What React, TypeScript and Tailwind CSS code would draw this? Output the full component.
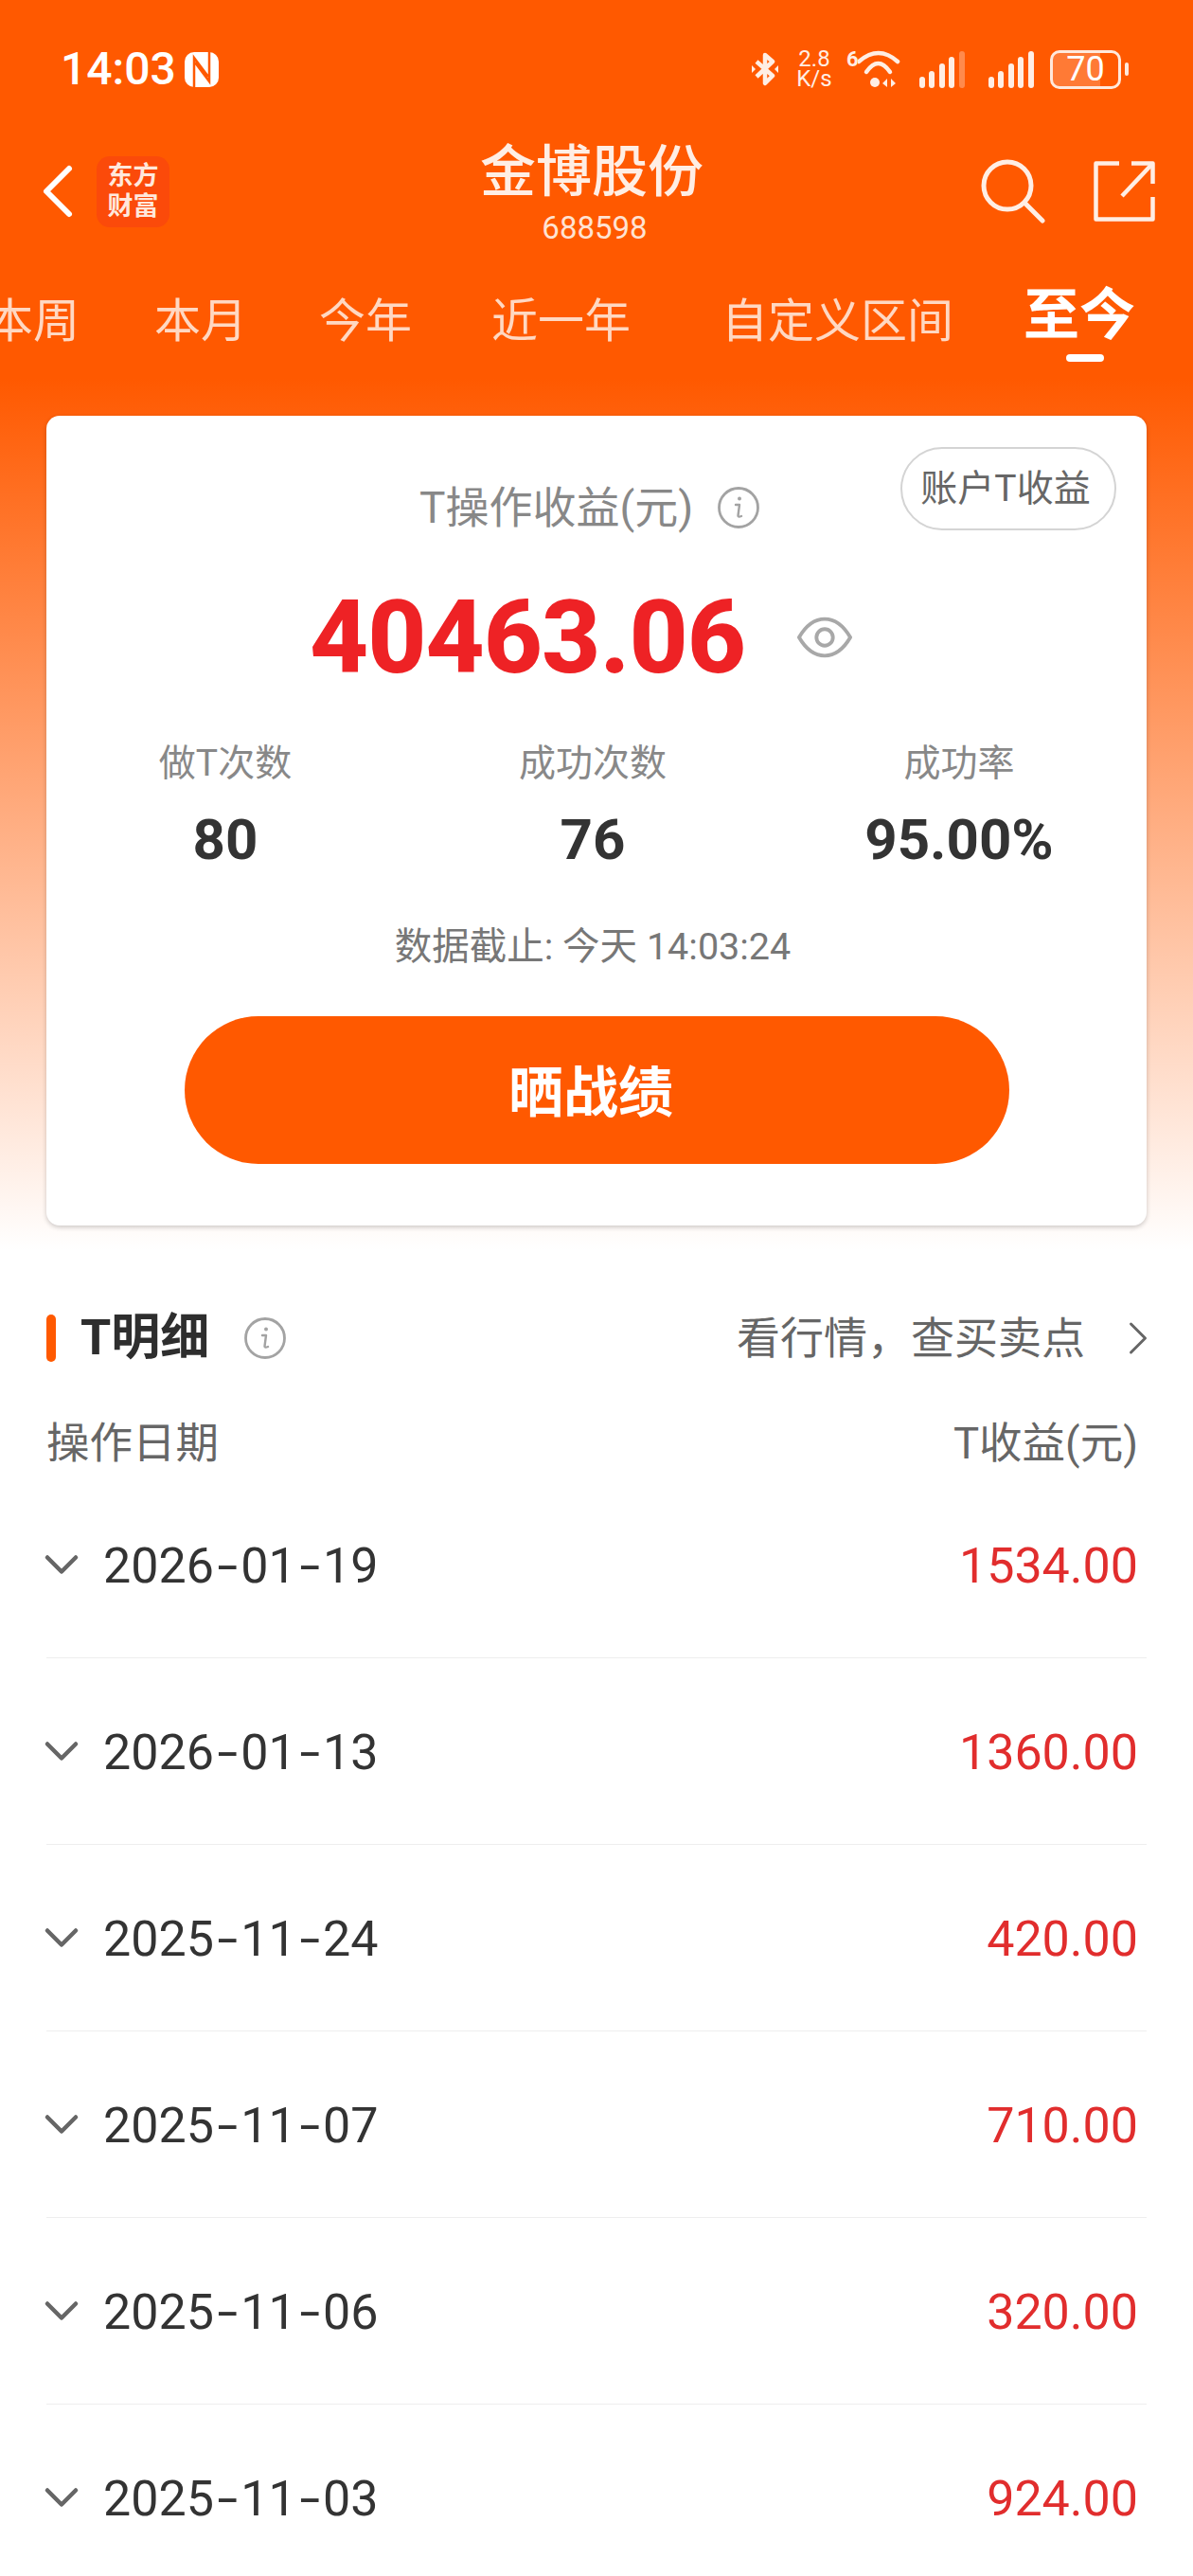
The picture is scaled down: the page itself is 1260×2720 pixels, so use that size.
import { ChevronDown, ChevronLeft, ChevronRight } from 'lucide-react';

const cjk = "font-['Roboto','Noto_Sans_CJK_SC',sans-serif]";

const tabs = [
  { label: '本周', className: '-ml-[14px]' },
  { label: '本月', className: 'ml-[79px]' },
  { label: '今年', className: 'ml-[76px]' },
  { label: '近一年', className: 'ml-[84px]' },
  { label: '自定义区间', className: 'ml-[96px]' },
];

const stats = [
  { label: '做T次数', value: '80' },
  { label: '成功次数', value: '76' },
  { label: '成功率', value: '95.00%' },
];

const rows = [
  { date: ['2026', '01', '19'], amount: '1534.00' },
  { date: ['2026', '01', '13'], amount: '1360.00' },
  { date: ['2025', '11', '24'], amount: '420.00' },
  { date: ['2025', '11', '07'], amount: '710.00' },
  { date: ['2025', '11', '06'], amount: '320.00' },
  { date: ['2025', '11', '03'], amount: '924.00' },
];

function InfoIcon({ className }: { className?: string }) {
  return (
    <svg viewBox="0 0 46 46" className={className} fill="none" stroke="#a3a3a3" strokeWidth="2.8">
      <circle cx="23" cy="23" r="20.5" />
      <circle cx="24" cy="13.5" r="2" fill="#a3a3a3" stroke="none" />
      <path d="M20 20h4l-1.5 11.5q0 2 3.5 0.5" strokeWidth="2.4" strokeLinecap="round" strokeLinejoin="round" />
    </svg>
  );
}

function SignalIcon({ dimLast }: { dimLast?: boolean }) {
  const bars = [
    { x: 0, h: 12 },
    { x: 10, h: 18 },
    { x: 21, h: 26 },
    { x: 31, h: 33 },
    { x: 42, h: 39 },
  ];
  return (
    <svg viewBox="0 0 49 39" className="h-[39px] w-[49px]">
      {bars.map((bar, index) => (
        <rect
          key={bar.x}
          x={bar.x}
          y={39 - bar.h}
          width="6"
          height={bar.h}
          rx="3"
          fill={dimLast && index === 4 ? '#ff8a4d' : '#ffeee4'}
        />
      ))}
    </svg>
  );
}

function StatusIcons() {
  return (
    <div className="flex items-center">
      {/* bluetooth */}
      <svg viewBox="0 0 28 36" className="h-[36px] w-[28px]" fill="none" stroke="#ffeee4" strokeWidth="4.5" strokeLinejoin="round">
        <path d="M5 10l17 15-8 8V3l8 7L5 26" />
        <path d="M0 14l4 4-4 4zM28 14l-4 4 4 4z" fill="#ffeee4" stroke="none" />
      </svg>
      <div className="ml-[19px] flex w-[38px] flex-col items-center text-[24px] text-[#ffeee4]">
        <span className="h-[21px] leading-[21px]">2.8</span>
        <span className="h-[21px] leading-[21px]">K/s</span>
      </div>
      {/* wifi */}
      <span className="mb-[20px] ml-[15px] w-[12px] text-[22px] leading-[20px] font-bold text-[#ffeee4]">6</span>
      <svg viewBox="12 0 45 40" className="h-[40px] w-[45px]" fill="none" stroke="#ffeee4" strokeLinecap="round">
        <path d="M13 12Q34-6 54 12" strokeWidth="4.5" />
        <path d="M21 23Q33.5 5 46 23" strokeWidth="4.5" />
        <circle cx="30" cy="34" r="5" fill="#ffeee4" stroke="none" />
        <path d="M43 30l-5 5 5 4zM47 30l5 5-5 4z" fill="#ffeee4" stroke="none" />
      </svg>
      <div className="ml-[20px]">
        <SignalIcon dimLast />
      </div>
      <div className="ml-[24px]">
        <SignalIcon />
      </div>
      <div className="ml-[16px] flex h-[41px] w-[75px] items-center justify-center overflow-hidden rounded-[10px] border-[3px] border-[#ffe9dc] bg-[linear-gradient(90deg,#ff7a35_0,#ff7a35_72%,transparent_72%)] text-[36px] leading-none text-white">
        70
      </div>
      <div className="ml-[4px] h-[14px] w-[4px] rounded-full bg-[#ffe9dc]" />
    </div>
  );
}

export default function App() {
  return (
    <div className={`h-[2720px] w-[1260px] overflow-hidden bg-white ${cjk}`}>
      <div className="bg-[linear-gradient(#ff5900_0,#ff5900_400px,#ffffff_1320px)] pb-[26px]">
        {/* status bar */}
        <div className="flex h-[146px] items-center justify-between pr-[68px] pl-[64px]">
          <div className="flex items-center">
            <span className="text-[48px] leading-none font-medium text-white">14:03</span>
            <svg viewBox="0 0 36 37" className="ml-[9px] h-[37px] w-[36px]">
              <rect width="36" height="37" rx="10" fill="#fff" />
              <path d="M10 37V6l15 20M26 0v31L11 11" stroke="#ff5900" strokeWidth="2.5" fill="none" />
            </svg>
          </div>
          <StatusIcons />
        </div>

        {/* nav */}
        <div className="grid h-[118px] grid-cols-[1fr_auto_1fr] px-[36px]">
          <div className="flex items-center pb-[6px]">
            <ChevronLeft className="-ml-[23px] h-[96px] w-[96px] shrink-0 text-white" strokeWidth={1.5} />
            <div className="-ml-[7px] flex h-[75px] w-[77px] shrink-0 flex-col items-center justify-center rounded-[14px] bg-[#fb4a0a] text-[27px] leading-[32px] font-bold text-[#ffe8dc]">
              <span>东方</span>
              <span>财富</span>
            </div>
          </div>
          <div className="mr-[10px] flex flex-col items-center">
            <span className="h-[72px] text-[59px] leading-[72px] font-medium text-[#ffeee4]">金博股份</span>
            <span className="h-[46px] pl-[6px] text-[33px] leading-[46px] text-[#ffe3d2]">688598</span>
          </div>
          <div className="flex items-center justify-end gap-[51px] pr-[4px] pb-[6px]">
            <svg viewBox="0 0 68 68" className="h-[68px] w-[68px]" fill="none" stroke="#ffeee4" strokeWidth="5" strokeLinecap="round">
              <circle cx="28" cy="28" r="25" />
              <path d="M47 47l18 18" />
            </svg>
            <svg viewBox="0 0 65 64" className="h-[64px] w-[65px]" fill="none" stroke="#ffeee4" strokeWidth="4.5" strokeLinejoin="round">
              <path d="M27 2.5H2.5v59h60V38" />
              <path d="M40 2.5h22.5V24" />
              <path d="M62 3L30 37" />
            </svg>
          </div>
        </div>

        {/* period tabs */}
        <div className="mt-[15px] flex h-[120px] items-center overflow-hidden">
          {tabs.map((tab) => (
            <span key={tab.label} className={`shrink-0 text-[49px] leading-none text-[#ffd8c2] ${tab.className}`}>
              {tab.label}
            </span>
          ))}
          <span className="relative -mt-[14px] ml-[74px] shrink-0 text-[59px] leading-none font-bold text-white">
            至今
            <span className="absolute top-[71px] left-[45px] h-[8px] w-[40px] rounded-full bg-white" />
          </span>
        </div>

        {/* summary card */}
        <div className="relative mx-[49px] mt-[40px] rounded-[14px] bg-white pt-[68px] pb-[65px] shadow-[0_2px_5px_rgba(0,0,0,0.2)]">
          <div className="absolute top-[33px] right-[32px] flex h-[88px] w-[228px] items-center justify-center rounded-full border-2 border-[#d4d4d4] pr-[6px] text-[39px] text-[#666]">
            账户T收益
          </div>
          <div className="flex h-[58px] items-center pl-[394px]">
            <span className="text-[46px] leading-none text-[#888]">T操作收益(元)</span>
            <InfoIcon className="ml-[25px] h-[46px] w-[46px]" />
          </div>
          <div className="mt-[48px] flex h-[120px] items-center pl-[278px]">
            <span className="text-[108px] leading-none font-extrabold tracking-[-1px] text-[#ee2225]">
              40463.06
            </span>
            <svg viewBox="0 0 60 44" className="ml-[55px] h-[44px] w-[58px]" fill="none" stroke="#a8a8a8" strokeWidth="4" strokeLinejoin="round">
              <path d="M2 22C9 10 19 2 30 2s21 8 28 20c-7 12-17 20-28 20S9 34 2 22z" />
              <circle cx="30" cy="22" r="9" />
            </svg>
          </div>
          <div className="mt-[48px] grid grid-cols-[378px_398px_376px]">
            {stats.map((stat) => (
              <div key={stat.label} className="flex flex-col items-center">
                <span className="h-[50px] text-[39px] leading-[50px] text-[#888]">{stat.label}</span>
                <span className="mt-[21px] h-[70px] text-[60px] leading-[70px] font-bold text-[#333]">
                  {stat.value}
                </span>
              </div>
            ))}
          </div>
          <div className="mt-[53px] h-[50px] pr-[8px] text-center text-[39.5px] leading-[50px] text-[#777]">
            数据截止: 今天 14:03:24
          </div>
          <div className="mx-auto mt-[48px] flex h-[156px] w-[871px] items-center justify-center rounded-full bg-[#ff5900] pt-[6px] pr-[12px] text-[58px] font-bold text-white">
            晒战绩
          </div>
        </div>
      </div>

      {/* detail list */}
      <div className="px-[49px] pt-[63px]">
        <div className="flex h-[60px] items-center">
          <div className="h-[50px] w-[10px] rounded-full bg-[#ff5900]" />
          <span className="ml-[26px] text-[52px] leading-none font-bold text-[#2e2e2e]">T明细</span>
          <InfoIcon className="ml-[36px] h-[46px] w-[46px]" />
          <span className="ml-auto text-[46px] leading-none text-[#666]">看行情，查买卖点</span>
          <ChevronRight className="-mr-[21px] ml-[26px] h-[60px] w-[60px] shrink-0 text-[#666]" strokeWidth={1.2} />
        </div>
        <div className="mt-[52px] flex h-[60px] items-center justify-between pr-[9px] leading-none text-[#666]">
          <span className="text-[45.5px]">操作日期</span>
          <span className="text-[45.5px]">T收益(元)</span>
        </div>
        <div className="-mt-[1px]">
          {rows.map((row) => (
            <div key={row.date.join('-')} className="flex h-[197px] items-center border-b border-[#eeeeee] pt-[4px] pr-[9px]">
              <ChevronDown className="-ml-[14px] mb-[4px] h-[60px] w-[60px] shrink-0 text-[#666]" strokeWidth={1.8} />
              <span className="ml-[14px] text-[52px] leading-none text-[#333]">
                {row.date[0]}
                <span className="mx-[7px] inline-block scale-x-150">-</span>
                {row.date[1]}
                <span className="mx-[7px] inline-block scale-x-150">-</span>
                {row.date[2]}
              </span>
              <span className="ml-auto text-[52px] leading-none text-[#e12d2d]">{row.amount}</span>
            </div>
          ))}
        </div>
      </div>
    </div>
  );
}
